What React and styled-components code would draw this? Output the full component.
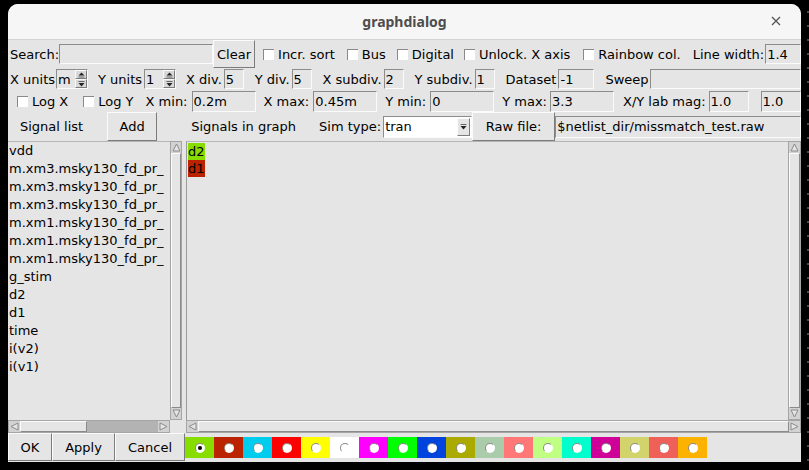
import React from 'react';
import styled, { createGlobalStyle } from 'styled-components';

const GlobalStyle = createGlobalStyle`
  html, body { margin: 0; padding: 0; background: #000; }
  body { font-family: "DejaVu Sans", "Liberation Sans", sans-serif; font-size: 13px; color: #000; }
  * { box-sizing: border-box; }
`;

const BG = '#e5e5e5';
const DARK = '#8c8c8c';

const Screen = styled.div`
  width: 809px;
  height: 470px;
  overflow: hidden;
  background-color: #000;
  background-image: radial-gradient(circle, #4a4a4a 0.7px, transparent 1.1px);
  background-size: 14px 14px;
  background-position: 3px 5px;
  padding: 4px 0 0 8px;
`;

const Window = styled.div`
  width: 793px;
  height: 458px;
  display: flex;
  flex-direction: column;
  border-radius: 10px 10px 0 0;
  overflow: hidden;
  background: ${BG};
`;

const TitleBar = styled.div`
  height: 36px;
  flex: none;
  display: grid;
  grid-template-columns: 1fr auto 1fr;
  align-items: center;
  background: #f6f6f6;
  border-bottom: 1px solid #d4d4d4;
  font-family: "Noto Sans", "DejaVu Sans", sans-serif;
  font-weight: bold;
  font-size: 14px;
  color: #4d4d4d;
`;

const Title = styled.div`
  grid-column: 2;
  margin-top: -1px;
`;

const Close = styled.div`
  justify-self: end;
  margin-right: 20px;
  margin-top: -1px;
  display: flex;
`;

const Row = styled.div`
  height: ${p => p.$h}px;
  flex: none;
  display: flex;
  align-items: center;
  padding-left: 2px;
  white-space: nowrap;
`;

const Label = styled.span`
  margin-left: ${p => p.$ml || 0}px;
  flex: none;
`;

const Entry = styled.div`
  margin-left: ${p => p.$ml || 0}px;
  width: ${p => (p.$w ? `${p.$w}px` : 'auto')};
  flex: ${p => (p.$w ? 'none' : '1')};
  height: ${p => p.$h || 20}px;
  display: flex;
  align-items: center;
  padding-left: 1px;
  background: ${p => p.$bg || BG};
  border: 1px solid;
  border-color: ${DARK} #fbfbfb #fbfbfb ${DARK};
  overflow: hidden;
`;

const Button = styled.button`
  margin-left: ${p => p.$ml || 0}px;
  width: ${p => p.$w}px;
  height: ${p => p.$h || 28}px;
  flex: none;
  padding: 0;
  font: inherit;
  color: #000;
  background: ${BG};
  border: 1px solid;
  border-color: #fbfbfb #7c7c7c #7c7c7c #fbfbfb;
`;

const Check = styled.span`
  margin-left: ${p => p.$ml || 0}px;
  display: flex;
  align-items: center;
  gap: 4px;
  flex: none;
`;

const Box = styled.span`
  width: 11px;
  height: 11px;
  background: #fff;
  border-top: 1px solid #8a8a8a;
  border-left: 1px solid #8a8a8a;
`;

const SpinWrap = styled(Entry)`
  padding-right: 0;
  justify-content: space-between;
`;

const SpinArrows = styled.div`
  width: 12px;
  height: 18px;
  display: flex;
  flex-direction: column;
`;

const SpinBtn = styled.div`
  flex: 1;
  display: flex;
  align-items: center;
  justify-content: center;
  background: #d8d8d8;
  border: 1px solid;
  border-color: #fbfbfb #7c7c7c #7c7c7c #fbfbfb;
`;

const ComboBtn = styled.div`
  width: 13px;
  height: 18px;
  margin-left: auto;
  margin-right: 1px;
  display: flex;
  align-items: center;
  justify-content: center;
  background: ${BG};
  border: 1px solid;
  border-color: #fbfbfb #7c7c7c #7c7c7c #fbfbfb;
`;

const Panes = styled.div`
  height: 292px;
  flex: none;
  display: flex;
  gap: 4px;
`;

const Pane = styled.div`
  width: ${p => (p.$w ? `${p.$w}px` : 'auto')};
  flex: ${p => (p.$w ? 'none' : '1')};
  display: flex;
  flex-direction: column;
`;

const PaneTop = styled.div`
  flex: 1;
  display: flex;
  min-height: 0;
`;

const PaneBottom = styled.div`
  height: 13px;
  flex: none;
  display: flex;
`;

const ListBox = styled.div`
  flex: 1;
  overflow: hidden;
  border-top: 1px solid #b5b5b5;
  padding-left: 1px;
  line-height: 18px;
  white-space: nowrap;
`;

const TextArea = styled.div`
  flex: 1;
  overflow: hidden;
  border-top: 1px solid #b5b5b5;
  border-left: 1px solid #9a9a9a;
  padding: 1px 0 0 1px;
  line-height: 17px;
`;

const Tag = styled.div`
  display: inline-block;
  background: ${p => p.$c};
  height: 17px;
`;

const VScroll = styled.div`
  width: ${p => p.$w || 12}px;
  flex: none;
  display: flex;
  flex-direction: column;
  background: #c4c4c4;
  border: 1px solid #a5a5a5;
`;

const HScroll = styled.div`
  width: ${p => (p.$w ? `${p.$w}px` : 'auto')};
  flex: ${p => (p.$w ? 'none' : '1')};
  display: flex;
  background: #b3b3b3;
  border: 1px solid #a5a5a5;
`;

const Arrow = styled.div`
  flex: none;
  width: ${p => (p.$v ? 'auto' : '11px')};
  height: ${p => (p.$v ? '11px' : 'auto')};
  display: flex;
  align-items: center;
  justify-content: center;
  background: #d2d2d2;
`;

const Slider = styled.div`
  flex: ${p => (p.$w ? 'none' : '1')};
  width: ${p => (p.$w ? `${p.$w}px` : 'auto')};
  background: ${BG};
  border: 1px solid;
  border-color: #fbfbfb #8a8a8a #8a8a8a #fbfbfb;
`;

const Trough = styled.div`
  flex: 1;
`;

const Corner = styled.div`
  width: 12px;
  flex: none;
`;

const BottomRow = styled.div`
  height: 29px;
  flex: none;
  display: flex;
  align-items: flex-start;
`;

const Swatches = styled.div`
  display: flex;
  margin-top: 4px;
`;

const Swatch = styled.div`
  width: 29px;
  height: 21px;
  background: ${p => p.$c};
  display: flex;
  align-items: center;
  justify-content: center;
`;

const Dot = styled.div`
  width: 10px;
  height: 10px;
  border-radius: 50%;
  background: #fff;
  border: 1px solid;
  border-color: rgba(0,0,0,0.45) rgba(255,255,255,0.9) rgba(255,255,255,0.9) rgba(0,0,0,0.45);
  display: flex;
  align-items: center;
  justify-content: center;
  &::after {
    content: '';
    width: 4px;
    height: 4px;
    border-radius: 50%;
    background: ${p => (p.$on ? '#000' : 'transparent')};
  }
`;

const Tri = ({ dir, size = 9 }) => {
  const s = size;
  const pts = {
    up: `${s / 2},1 ${s - 1},${s - 1} 1,${s - 1}`,
    down: `1,1 ${s - 1},1 ${s / 2},${s - 1}`,
    left: `1,${s / 2} ${s - 1},1 ${s - 1},${s - 1}`,
    right: `1,1 ${s - 1},${s / 2} 1,${s - 1}`,
  }[dir];
  return (
    <svg width={s} height={s} viewBox={`0 0 ${s} ${s}`}>
      <polygon points={pts} fill="#e6e6e6" stroke="#8a8a8a" strokeWidth="1" />
    </svg>
  );
};

const SmallArrow = ({ up }) => (
  <svg width="7" height="6" viewBox="0 0 7 6">
    {up ? (
      <>
        <polygon points="3.5,0.5 6.5,3.5 0.5,3.5" fill="#222" />
        <line x1="0.5" y1="5" x2="6.5" y2="5" stroke="#666" />
      </>
    ) : (
      <>
        <line x1="0.5" y1="0.5" x2="6.5" y2="0.5" stroke="#666" />
        <polygon points="0.5,2 6.5,2 3.5,5.5" fill="#222" />
      </>
    )}
  </svg>
);

const Spin = ({ value, ml }) => (
  <SpinWrap $w={32} $ml={ml}>
    <span>{value}</span>
    <SpinArrows>
      <SpinBtn><SmallArrow up /></SpinBtn>
      <SpinBtn><SmallArrow /></SpinBtn>
    </SpinArrows>
  </SpinWrap>
);

const Ck = ({ ml, children }) => (
  <Check $ml={ml}>
    <Box />
    <span>{children}</span>
  </Check>
);

const signals = [
  'vdd',
  'm.xm3.msky130_fd_pr_',
  'm.xm3.msky130_fd_pr_',
  'm.xm3.msky130_fd_pr_',
  'm.xm1.msky130_fd_pr_',
  'm.xm1.msky130_fd_pr_',
  'm.xm1.msky130_fd_pr_',
  'g_stim',
  'd2',
  'd1',
  'time',
  'i(v2)',
  'i(v1)',
];

const colors = [
  '#88dd00', '#bb2200', '#00ccee', '#ff0000', '#ffff00', '#ffffff',
  '#ff00ff', '#00ff00', '#0044dd', '#aaaa00', '#aaccaa', '#ff7777',
  '#bfff81', '#00ffcc', '#ce0097', '#d2d46b', '#ef6158', '#fdb200',
];

export default function App() {
  return (
    <Screen>
      <GlobalStyle />
      <Window>
        <TitleBar>
          <Title>graphdialog</Title>
          <Close>
            <svg width="10" height="10" viewBox="0 0 10 10">
              <path d="M1 1 L9 9 M9 1 L1 9" stroke="#555" strokeWidth="1.3" />
            </svg>
          </Close>
        </TitleBar>

        <Row $h={28}>
          <Label>Search:</Label>
          <Entry $w={154} />
          <Button $w={42}>Clear</Button>
          <Ck ml={8}>Incr. sort</Ck>
          <Ck ml={12}>Bus</Ck>
          <Ck ml={11}>Digital</Ck>
          <Ck ml={10}>Unlock. X axis</Ck>
          <Ck ml={13}>Rainbow col.</Ck>
          <Label $ml={12}>Line width:</Label>
          <Entry $ml={1}>1.4</Entry>
        </Row>

        <Row $h={22}>
          <Label>X units</Label>
          <Spin value="m" ml={1} />
          <Label $ml={10}>Y units</Label>
          <Spin value="1" ml={2} />
          <Label $ml={10}>X div.</Label>
          <Entry $w={20} $ml={2}>5</Entry>
          <Label $ml={11}>Y div.</Label>
          <Entry $w={20} $ml={2}>5</Entry>
          <Label $ml={11}>X subdiv.</Label>
          <Entry $w={20} $ml={2}>2</Entry>
          <Label $ml={11}>Y subdiv.</Label>
          <Entry $w={20} $ml={2}>1</Entry>
          <Label $ml={11}>Dataset</Label>
          <Entry $w={36} $ml={2}>-1</Entry>
          <Label $ml={11}>Sweep</Label>
          <Entry $ml={1} />
        </Row>

        <Row $h={22}>
          <Ck ml={7}>Log X</Ck>
          <Ck ml={15}>Log Y</Ck>
          <Label $ml={12}>X min:</Label>
          <Entry $w={64} $h={21} $ml={4}>0.2m</Entry>
          <Label $ml={8}>X max:</Label>
          <Entry $w={64} $h={21} $ml={4}>0.45m</Entry>
          <Label $ml={8}>Y min:</Label>
          <Entry $w={64} $h={21} $ml={4}>0</Entry>
          <Label $ml={8}>Y max:</Label>
          <Entry $w={64} $h={21} $ml={3}>3.3</Entry>
          <Label $ml={9}>X/Y lab mag:</Label>
          <Entry $w={40} $h={21} $ml={3}>1.0</Entry>
          <Entry $h={21} $ml={12}>1.0</Entry>
        </Row>

        <Row $h={29}>
          <Label $ml={10}>Signal list</Label>
          <Button $w={50} $h={29} $ml={24}>Add</Button>
          <Label $ml={34}>Signals in graph</Label>
          <Label $ml={23}>Sim type:</Label>
          <Entry $w={89} $h={22} $ml={2} $bg="#ffffff">
            <span>tran</span>
            <ComboBtn><SmallArrow /></ComboBtn>
          </Entry>
          <Button $w={83} $h={29}>Raw file:</Button>
          <Entry $h={22}>$netlist_dir/missmatch_test.raw</Entry>
        </Row>

        <Panes>
          <Pane $w={174}>
            <PaneTop>
              <ListBox>
                {signals.map((s, i) => <div key={i}>{s}</div>)}
              </ListBox>
              <VScroll>
                <Arrow $v><Tri dir="up" /></Arrow>
                <Slider />
                <Arrow $v><Tri dir="down" /></Arrow>
              </VScroll>
            </PaneTop>
            <PaneBottom>
              <HScroll>
                <Arrow><Tri dir="left" /></Arrow>
                <Slider $w={67} />
                <Trough />
                <Arrow><Tri dir="right" /></Arrow>
              </HScroll>
              <Corner />
            </PaneBottom>
          </Pane>
          <Pane>
            <PaneTop>
              <TextArea>
                <div><Tag $c="#88dd00">d2</Tag></div>
                <div><Tag $c="#bb2200">d1</Tag></div>
              </TextArea>
              <VScroll $w={13}>
                <Arrow $v><Tri dir="up" /></Arrow>
                <Slider />
                <Arrow $v><Tri dir="down" /></Arrow>
              </VScroll>
            </PaneTop>
            <PaneBottom>
              <HScroll>
                <Arrow><Tri dir="left" /></Arrow>
                <Slider />
                <Arrow><Tri dir="right" /></Arrow>
              </HScroll>
            </PaneBottom>
          </Pane>
        </Panes>

        <BottomRow>
          <Button $w={44}>OK</Button>
          <Button $w={63}>Apply</Button>
          <Button $w={70}>Cancel</Button>
          <Swatches>
            {colors.map((c, i) => (
              <Swatch key={c} $c={c}><Dot $on={i === 0} /></Swatch>
            ))}
          </Swatches>
        </BottomRow>
      </Window>
    </Screen>
  );
}
